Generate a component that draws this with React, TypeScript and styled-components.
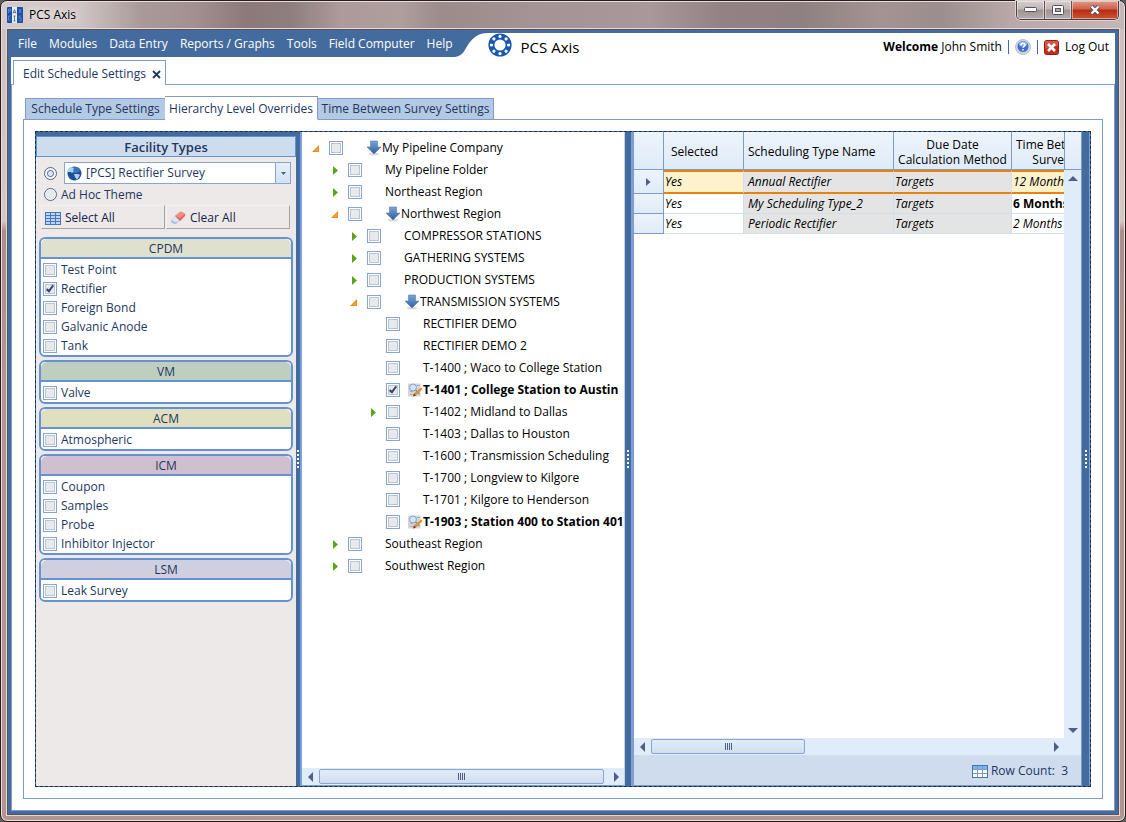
import React from "react";
import styled, { createGlobalStyle, css } from "styled-components";

const c = {
  blue: "#446b9e",
  line: "#7f9cc8",
  navy: "#1e3760",
  sky: "#e0ecfa",
  band: "#cfdcee",
  group: "#6592d0",
  orange: "#e8820f",
};

const GlobalStyle = createGlobalStyle`
  *, *::before, *::after { box-sizing: border-box; }
  html, body { margin: 0; padding: 0; background: #5b6063; }
  body {
    font-family: "Open Sans", "Noto Sans", sans-serif;
    font-size: 12px;
    line-height: 16px;
    color: #000;
  }
  button, select, input { font: inherit; color: inherit; margin: 0; padding: 0; }
  button { border: 0; background: none; white-space: nowrap; }
  svg { display: block; flex: none; }
`;

/* ---------- window chrome ---------- */

const Window = styled.div`
  display: flex;
  flex-direction: column;
  min-height: 100vh;
  padding: 0 6px 6px;
  border: 1px solid #241c1f;
  border-radius: 7px;
  box-shadow: inset 0 0 0 1px #eadfde;
  background:
    linear-gradient(90deg, #d5cbca 0, #cfc5c4 80px, #a99a99 140px, #a39291 190px, #8c7a7a 245px, #8f7e7e 290px, #ac9b9a 340px, #ae9e9c 400px, #9c8b8b 440px, #a59495 540px, #a8989a 650px, #938284 720px, #8f8081 800px, #a39392 880px, #9c8e8e 940px, #b8a9a8 1010px, #c5b7b6 100%) top / 100% 28px no-repeat,
    linear-gradient(180deg, #cfc0be 0, #d6c6c4 220px, #ad8e8a 230px, #b5958f 400px, #b3958f 100%);
`;

const TitleBar = styled.header`
  display: flex;
  align-items: center;
  gap: 6px;
  height: 28px;
`;

const WindowTitle = styled.span`
  flex: 1;
  text-shadow: 0 0 8px #fff, 0 0 8px #fff;
`;

const Caption = styled.div`
  display: flex;
  align-self: flex-start;
  height: 19px;
  overflow: hidden;
  border: 1px solid #4b4346;
  border-top: 0;
  border-radius: 0 0 5px 5px;
  box-shadow: 0 0 0 1px #ddd2d1;
`;

const CaptionButton = styled.button<{ $w: number; $close?: boolean }>`
  display: grid;
  place-items: center;
  width: ${(p) => p.$w}px;
  border-right: ${(p) => (p.$close ? "0" : "1px solid #5c5356")};
  box-shadow: inset 0 0 0 1px rgba(255, 255, 255, 0.45);
  background: ${(p) =>
    p.$close
      ? "linear-gradient(#dd9c8c 0, #cf5f47 45%, #b42c12 50%, #cf5432 100%)"
      : "linear-gradient(#d5cccc 0, #c2b7b7 45%, #9e9292 50%, #b7abac 100%)"};
`;

const Client = styled.div`
  display: flex;
  flex: 1;
  flex-direction: column;
  border: 1px solid #55535c;
  box-shadow: 0 0 0 1px #e4d9d7;
  background: ${c.blue};
`;

/* ---------- application header ---------- */

const AppHeader = styled.div`
  display: flex;
  height: 27px;
`;

const Menu = styled.nav`
  display: flex;
  align-items: center;
  gap: 12px;
  padding: 0 2px 0 10px;
  color: #fff;
`;

const HeaderSheet = styled.div`
  display: flex;
  flex: 1;
  margin: 3px 3px 0 0;
`;

const HeaderFill = styled.div`
  display: flex;
  flex: 1;
  justify-content: space-between;
  align-items: flex-start;
  background: #fff;
`;

const Brand = styled.div`
  display: flex;
  gap: 9px;
  font-size: 15px;
  line-height: 28px;
`;

const Account = styled.div`
  display: flex;
  align-items: center;
  gap: 6px;
  padding: 6px 6px 0 0;
  white-space: nowrap;
`;

const Divider = styled.i`
  width: 1px;
  height: 14px;
  background: ${c.blue};
`;

const PlainButton = styled.button`
  display: flex;
  align-items: center;
  gap: 6px;
`;

/* ---------- document and tabs ---------- */

const Sheet = styled.main`
  display: flex;
  flex: 1;
  flex-direction: column;
  margin: 0 3px 3px;
  padding-top: 3px;
  background: #fff;
`;

const DocTabs = styled.div`
  display: flex;
  padding-left: 2px;
  margin-bottom: -1px;
`;

const DocTab = styled.div`
  display: flex;
  align-items: center;
  gap: 6px;
  height: 25px;
  padding: 2px 4px 0 9px;
  border: 1px solid ${c.line};
  border-bottom: 0;
  background: #fff;
  color: ${c.navy};
  z-index: 1;
`;

const DocBody = styled.div`
  display: flex;
  flex: 1;
  flex-direction: column;
  padding: 11px;
  border: 1px solid ${c.line};
`;

const SubTabs = styled.div`
  display: flex;
  align-items: flex-end;
  margin-bottom: -1px;
  padding-left: 2px;
`;

const SubTab = styled.button<{ $w: number; $active?: boolean }>`
  width: ${(p) => p.$w}px;
  height: ${(p) => (p.$active ? 24 : 22)}px;
  padding-top: ${(p) => (p.$active ? 2 : 0)}px;
  margin-left: ${(p) => (p.$active ? -1 : 0)}px;
  border: 1px solid ${c.line};
  border-bottom-color: ${(p) => (p.$active ? "#fff" : c.line)};
  background: ${(p) => (p.$active ? "#fff" : "#b4c9e3")};
  color: ${c.navy};
  z-index: ${(p) => (p.$active ? 1 : 0)};
  & + & { border-left-width: ${(p) => (p.$active ? 1 : 0)}px; }
`;

const TabPanel = styled.section`
  display: flex;
  flex: 1;
  padding: 11px;
  border: 1px solid ${c.line};
`;

const Split = styled.div`
  display: flex;
  flex: 1;
  min-width: 0;
  border: 1px dashed #14304f;
  background: ${c.blue};
`;

const SplitterBar = styled.div<{ $w: number; $edge?: boolean }>`
  display: flex;
  flex: none;
  flex-direction: column;
  align-items: center;
  justify-content: center;
  gap: 2px;
  width: ${(p) => p.$w}px;
  border-right: ${(p) => (p.$edge ? "1px" : "2px")} solid #7ba0dc;
  background: ${c.blue};
`;

const Dot = styled.i`
  width: 2px;
  height: 2px;
  background: #fff;
`;

const Splitter = ({ w, edge }: { w: number; edge?: boolean }) => (
  <SplitterBar $w={w} $edge={edge} role="separator" aria-orientation="vertical">
    {[0, 1, 2, 3, 4].map((i) => (
      <Dot key={i} />
    ))}
  </SplitterBar>
);

/* ---------- check boxes and radios ---------- */

const tick = css`
  &:checked::after {
    content: "";
    width: 4px;
    height: 8px;
    margin-top: -2px;
    border: solid #3b4468;
    border-width: 0 2px 2px 0;
    transform: rotate(38deg);
  }
`;

const CheckBox = styled.input.attrs({ type: "checkbox" })`
  appearance: none;
  display: grid;
  place-items: center;
  flex: none;
  width: 14px;
  height: 14px;
  border: 1px solid #8aa5cd;
  box-shadow: inset 0 0 0 1px #fff, inset 0 0 0 2px #b9c6d9;
  background: #e8e9eb;
  ${tick}
`;

const Radio = styled.input.attrs({ type: "radio" })`
  appearance: none;
  flex: none;
  width: 13px;
  height: 13px;
  border: 1px solid #55658c;
  border-radius: 50%;
  background: radial-gradient(circle, #e6e8ec 0 4px, #f6f6f8 5px);
  &:checked {
    background: radial-gradient(circle, #dfe8f4 0 2px, #5c7db4 3px, #f6f6f8 4px);
  }
`;

/* ---------- facility types ---------- */

const Facilities = styled.aside`
  display: flex;
  flex: none;
  flex-direction: column;
  width: 260px;
  padding-top: 4px;
  background: linear-gradient(${c.blue} 4px, #ece9e8 4px);
  color: ${c.navy};
`;

const FacilitiesTitle = styled.h2`
  margin: 0;
  height: 21px;
  border: 1px solid ${c.group};
  background: ${c.band};
  font-size: 13px;
  line-height: 21px;
  font-weight: 600;
  text-align: center;
`;

const Themes = styled.div`
  display: grid;
  grid-template-columns: 13px 1fr;
  column-gap: 7px;
  align-items: center;
  padding: 5px 5px 0 8px;
`;

const ComboBox = styled.div`
  position: relative;
  height: 22px;
  > svg { position: absolute; top: 4px; left: 3px; pointer-events: none; }
`;

const Combo = styled.select`
  appearance: none;
  width: 100%;
  height: 22px;
  padding-left: 21px;
  border: 1px solid #8aa5cd;
  border-radius: 0;
  background: #fff;
`;

const ComboArrow = styled.span`
  position: absolute;
  top: 1px;
  right: 1px;
  display: grid;
  place-items: center;
  width: 15px;
  height: 20px;
  border-left: 1px solid #8aa5cd;
  background: linear-gradient(#e6effa, #d3e2f4);
  pointer-events: none;
`;

const AdHoc = styled.label`
  display: flex;
  align-items: center;
  gap: 4px;
  height: 21px;
  padding-left: 8px;
`;

const Actions = styled.div`
  display: grid;
  grid-template-columns: 1fr 1fr;
  gap: 1px;
  padding: 0 6px 0 5px;
  color: #15224a;
`;

const Action = styled.button`
  display: flex;
  align-items: center;
  gap: 4px;
  height: 24px;
  padding: 2px 0 0 3px;
  border: 1px solid #f3f1f0;
  border-right-color: #a5a2a2;
  border-bottom-color: #a5a2a2;
`;

const Groups = styled.div`
  display: flex;
  flex-direction: column;
  gap: 3px;
  padding: 8px 3px;
`;

const Group = styled.fieldset`
  min-width: 0;
  margin: 0;
  padding: 0;
  overflow: hidden;
  border: 2px solid ${c.group};
  border-radius: 6px;
  background: #fff;
`;

const GroupTitle = styled.div<{ $tone: string }>`
  height: 20px;
  border-bottom: 2px solid ${c.group};
  margin-bottom: 1px;
  background: ${(p) => p.$tone};
  line-height: 20px;
  text-align: center;
`;

const Facility = styled.label`
  display: flex;
  align-items: center;
  gap: 4px;
  height: 19px;
  padding-left: 2px;
`;

/* ---------- pipeline tree ---------- */

const TreePanel = styled.section`
  display: flex;
  flex: none;
  flex-direction: column;
  width: 323px;
  border-right: 1px solid #c3d4ea;
  border-bottom: 1px solid ${c.line};
  background: #fff;
`;

const TreeList = styled.ul`
  flex: 1;
  margin: 0;
  padding: 5px 0 0 6px;
  list-style: none;
`;

const TreeRow = styled.li<{ $level: number }>`
  display: flex;
  align-items: center;
  height: 22px;
  padding-left: ${(p) => p.$level * 19}px;
  white-space: nowrap;
`;

const Toggle = styled.span`
  display: grid;
  place-items: center;
  width: 15px;
  height: 16px;
  margin-right: 6px;
`;

const TreeLabel = styled.label<{ $bold?: boolean }>`
  display: flex;
  align-items: center;
  font-weight: ${(p) => (p.$bold ? 700 : 400)};
`;

const IconSlot = styled.span`
  display: flex;
  justify-content: flex-end;
  width: 23px;
`;

/* ---------- scroll bars ---------- */

const HBar = styled.div`
  display: flex;
  align-items: center;
  flex: none;
  height: 17px;
  background: ${c.sky};
`;

const Track = styled.div`
  display: flex;
  flex: 1;
`;

const Thumb = styled.div<{ $share: number }>`
  display: flex;
  align-items: center;
  justify-content: center;
  gap: 1px;
  width: ${(p) => p.$share}%;
  height: 15px;
  border: 1px solid #8aa5cd;
  border-radius: 2px;
  background: linear-gradient(#e0ecf9, #cfdeef);
`;

const Ridge = styled.i`
  width: 1px;
  height: 7px;
  background: #4f5f85;
`;

const ScrollButton = styled.button`
  display: grid;
  place-items: center;
  width: 17px;
  height: 17px;
`;

const ArrowGlyph = ({ dir }: { dir: "left" | "right" | "up" | "down" }) => {
  const d = {
    left: "M7 0v10L2 5z",
    right: "M3 0v10l5-5z",
    up: "M0 7h10L5 2z",
    down: "M0 3h10L5 8z",
  }[dir];
  return (
    <svg width="10" height="10" viewBox="0 0 10 10">
      <path d={d} fill="#4f5f85" />
    </svg>
  );
};

const HScroll = ({ share }: { share: number }) => (
  <HBar>
    <ScrollButton aria-label="Scroll left">
      <ArrowGlyph dir="left" />
    </ScrollButton>
    <Track>
      <Thumb $share={share}>
        {[0, 1, 2, 3].map((i) => (
          <Ridge key={i} />
        ))}
      </Thumb>
    </Track>
    <ScrollButton aria-label="Scroll right">
      <ArrowGlyph dir="right" />
    </ScrollButton>
  </HBar>
);

/* ---------- schedule grid ---------- */

const GridPanel = styled.section`
  display: flex;
  flex: 1;
  flex-direction: column;
  min-width: 0;
  border: 1px solid ${c.line};
  border-top: 0;
  background: #fff;
`;

const GridTop = styled.div`
  display: flex;
  flex: 1;
`;

const Viewport = styled.div`
  flex: 1;
  min-width: 0;
  width: 0;
  overflow: hidden;
`;

const Table = styled.table`
  width: 463px;
  min-width: 100%;
  table-layout: fixed;
  border-collapse: separate;
  border-spacing: 0;
`;

const Th = styled.th<{ $align?: string; $indent?: number }>`
  height: 38px;
  padding: 2px 4px 0 ${(p) => p.$indent ?? 4}px;
  border-right: 1px solid ${c.line};
  border-bottom: 1px solid ${c.line};
  background: linear-gradient(#edf4fc, #dfebf8);
  font-weight: 400;
  line-height: 15px;
  text-align: ${(p) => p.$align ?? "left"};
  white-space: nowrap;
`;

const Marker = styled.td<{ $current?: boolean }>`
  height: ${(p) => (p.$current ? 24 : 20)}px;
  padding: 0 0 0 12px;
  border-right: 1px solid ${c.line};
  border-bottom: 1px solid ${c.line};
  background: linear-gradient(#edf4fc, #dfebf8);
`;

const Td = styled.td<{ $current?: boolean; $tone: "edit" | "locked"; $bold?: boolean; $inset?: boolean }>`
  padding: 0 0 0 ${(p) => (p.$inset ? 4 : 1)}px;
  border-right: 1px solid #d3deec;
  border-bottom: 1px solid #d3deec;
  background: ${(p) => (p.$tone === "locked" ? "#e4e4e4" : p.$current ? "#fdf2cb" : "#fff")};
  font-style: ${(p) => (p.$bold ? "normal" : "italic")};
  font-weight: ${(p) => (p.$bold ? 700 : 400)};
  white-space: nowrap;
  overflow: hidden;
  ${(p) =>
    p.$current &&
    css`
      border-top: 2px solid ${c.orange};
      border-bottom: 2px solid ${c.orange};
    `}
`;

const VBar = styled.div`
  display: flex;
  flex: none;
  flex-direction: column;
  width: 17px;
  background: ${c.sky};
`;

const HeadCorner = styled.div`
  height: 38px;
  border-left: 1px solid ${c.line};
  border-bottom: 1px solid ${c.line};
  background: linear-gradient(#edf4fc, #dfebf8);
`;

const Grow = styled.div`
  flex: 1;
`;

const BarRow = styled.div`
  padding-right: 17px;
  background: ${c.sky};
`;

const GridFooter = styled.footer`
  display: flex;
  align-items: center;
  justify-content: flex-end;
  gap: 3px;
  height: 30px;
  padding: 2px 13px 0 0;
  background: ${c.band};
  color: ${c.navy};
  white-space: pre;
`;

/* ---------- drawings ---------- */

const AppIcon = () => (
  <svg width="16" height="16" viewBox="0 0 16 16">
    <rect width="16" height="16" rx="1" fill="#1c4fa8" />
    <path d="M5 0h5v16H5z" fill="#e8eef8" />
    <path d="M6 6.500l1.500-4L9 6.500M6.500 5.500h2M7.500 9v5M6.500 9h2M6.500 14h2" stroke="#556" fill="none" strokeWidth=".8" />
    <path d="M1.500 6V2h2v2h-2M3.500 9h-2v4h2M12 2l2 4M14 2l-2 4M14 9h-2v2h2v3h-2" stroke="#6b93d6" fill="none" strokeWidth=".8" />
  </svg>
);

const LogoRing = () => (
  <svg width="24" height="24" viewBox="0 0 24 24">
    <circle cx="12" cy="12" r="8.600" fill="none" stroke="#1957b4" strokeWidth="6" />
    {[0, 45, 90, 135, 180, 225, 270, 315].map((a) => (
      <circle key={a} cx="12" cy="3.400" r="1.600" fill="#fff" transform={`rotate(${a} 12 12)`} />
    ))}
  </svg>
);

const Swoosh = () => (
  <svg width="33" height="24" viewBox="0 0 33 24">
    <path d="M0 24C9 23 10 15 15 9C20 3 25 0 33 0V24z" fill="#fff" />
  </svg>
);

const HelpIcon = () => (
  <svg width="16" height="16" viewBox="0 0 16 16">
    <circle cx="8" cy="8" r="7.500" fill="#d5d8de" stroke="#b8bcc4" />
    <circle cx="8" cy="7.500" r="5.500" fill="#3f6fd0" />
    <ellipse cx="8" cy="5" rx="4" ry="2.600" fill="#8fb1ee" />
    <path d="M6 6.200c0-2.600 4-2.500 4-.2 0 1.400-2 1.400-2 2.800" fill="none" stroke="#fff" strokeWidth="1.500" />
    <circle cx="8" cy="10.800" r="0.900" fill="#fff" />
  </svg>
);

const LogoutIcon = () => (
  <svg width="15" height="15" viewBox="0 0 15 15">
    <rect x=".5" y=".5" width="14" height="14" rx="2" fill="#c02b1e" stroke="#a3180f" />
    <path d="M1 2q0-1 1-1h11q1 0 1 1v4q-6 0-13 3z" fill="#dd6a5b" opacity=".7" />
    <path d="M4 4l7 7M11 4l-7 7" stroke="#fff" strokeWidth="2.600" />
  </svg>
);

const GlobeIcon = () => (
  <svg width="15" height="15" viewBox="0 0 15 15">
    <circle cx="7.500" cy="7.500" r="7" fill="#1f4f94" />
    <ellipse cx="8" cy="4" rx="5" ry="3" fill="#4a83c8" opacity=".7" />
    <path d="M0 6q1-4 4-5l3 1-1 2 1 1-2 2-1-1zM7 8l4 0 2 1-3 5-2-3z" fill="#a9d2f2" />
  </svg>
);

const TableIcon = ({ head }: { head?: boolean }) => (
  <svg width="16" height="13" viewBox="0 0 16 13">
    <rect x=".5" y=".5" width="15" height="12" fill={head ? "#fff" : "#b9d6f2"} stroke="#4a74b8" />
    {head && <path d="M1 1h14v3H1z" fill="#79b4ea" />}
    <path
      d={head ? "M1 4.500h14M1 8.500h14M5.500 1v11M10.500 1v11" : "M1 3.500h14M1 6.500h14M1 9.500h14M5.500 1v11M10.500 1v11"}
      stroke={head ? "#7f97c9" : "#4a74b8"}
    />
  </svg>
);

const EraserIcon = () => (
  <svg width="16" height="14" viewBox="0 0 16 14">
    <path d="M1 9l4-4 5 4-4 4H4L1 11z" fill="#a9c3e6" />
    <path d="M1 9l4-4 5 4-4 2z" fill="#dbe7f6" />
    <path d="M5 5l5-4q1-.7 2 0l3 2q.7 1 0 2l-5 5z" fill="#dd6357" />
    <path d="M5 5l5-4q1-.7 2 0l3 2-5 4z" fill="#ee9085" />
  </svg>
);

const DownArrow = () => (
  <svg width="16" height="16" viewBox="0 0 16 16">
    <defs>
      <linearGradient id="down" x2="0" y2="1">
        <stop offset="0" stopColor="#7ba3d6" />
        <stop offset="1" stopColor="#2f5f9f" />
      </linearGradient>
    </defs>
    <ellipse cx="8" cy="14" rx="5" ry="1.500" fill="#dcdcdc" />
    <path d="M4.500 1h7v6h3.500L8 14 1 7h3.500z" fill="url(#down)" stroke="#4f7db8" strokeWidth=".6" />
  </svg>
);

const EditIcon = () => (
  <svg width="15" height="16" viewBox="0 0 15 16">
    <path d="M0 1.500h12.500v13H0z" fill="#d6d6d6" />
    <path d="M2 9.500h3M2 12.500h3M9 3.500h3" stroke="#b0b0b0" />
    <circle cx="5" cy="5.500" r="3.500" fill="#cfe4f7" stroke="#8aa4c0" />
    <path d="M7.500 8l4 4" stroke="#8b8b8b" strokeWidth="1.500" />
    <path d="M5 14.500l1-3 7-6 1.500 1.500-6.500 6.500z" fill="#d9923d" />
    <path d="M5 14.500l1-3 2 2z" fill="#584a3e" />
  </svg>
);

const Closed = () => (
  <svg width="9" height="9" viewBox="-3 0 9 9">
    <path d="M0 0l5 4.500L0 9z" fill="#58a618" />
  </svg>
);

const Opened = () => (
  <svg width="7" height="7" viewBox="0 0 7 7">
    <path d="M7 0v7H0z" fill="#f08c1e" />
    <path d="M6 3v3H3z" fill="#f7a548" />
  </svg>
);

/* ---------- data ---------- */

const menus = ["File", "Modules", "Data Entry", "Reports / Graphs", "Tools", "Field Computer", "Help"];

const groups = [
  { name: "CPDM", tone: "#dfe0cd", items: ["Test Point", "Rectifier", "Foreign Bond", "Galvanic Anode", "Tank"] },
  { name: "VM", tone: "#bfcfbf", items: ["Valve"] },
  { name: "ACM", tone: "#e0dfbf", items: ["Atmospheric"] },
  { name: "ICM", tone: "#d0bfcf", items: ["Coupon", "Samples", "Probe", "Inhibitor Injector"] },
  { name: "LSM", tone: "#d0cfe0", items: ["Leak Survey"] },
];

type Node = { level: number; name: string; state?: "open" | "closed"; edited?: boolean; checked?: boolean };

const nodes: Node[] = [
  { level: 0, name: "My Pipeline Company", state: "open" },
  { level: 1, name: "My Pipeline Folder", state: "closed" },
  { level: 1, name: "Northeast Region", state: "closed" },
  { level: 1, name: "Northwest Region", state: "open" },
  { level: 2, name: "COMPRESSOR STATIONS", state: "closed" },
  { level: 2, name: "GATHERING SYSTEMS", state: "closed" },
  { level: 2, name: "PRODUCTION SYSTEMS", state: "closed" },
  { level: 2, name: "TRANSMISSION SYSTEMS", state: "open" },
  { level: 3, name: "RECTIFIER DEMO" },
  { level: 3, name: "RECTIFIER DEMO 2" },
  { level: 3, name: "T-1400 ; Waco to College Station" },
  { level: 3, name: "T-1401 ; College Station to Austin", edited: true, checked: true },
  { level: 3, name: "T-1402 ; Midland to Dallas", state: "closed" },
  { level: 3, name: "T-1403 ; Dallas to Houston" },
  { level: 3, name: "T-1600 ; Transmission Scheduling" },
  { level: 3, name: "T-1700 ; Longview to Kilgore" },
  { level: 3, name: "T-1701 ; Kilgore to Henderson" },
  { level: 3, name: "T-1903 ; Station 400 to Station 401", edited: true },
  { level: 1, name: "Southeast Region", state: "closed" },
  { level: 1, name: "Southwest Region", state: "closed" },
];

const schedules = [
  { type: "Annual Rectifier", every: "12 Months", current: true },
  { type: "My Scheduling Type_2", every: "6 Months", custom: true },
  { type: "Periodic Rectifier", every: "2 Months" },
];

export default function App() {
  return (
    <>
      <GlobalStyle />
      <Window>
        <TitleBar>
          <AppIcon />
          <WindowTitle>PCS Axis</WindowTitle>
          <Caption>
            <CaptionButton $w={28} aria-label="Minimize">
              <svg width="13" height="6" viewBox="0 0 13 6">
                <rect x=".5" y=".5" width="12" height="4" rx="1" fill="#fff" stroke="#54515c" />
              </svg>
            </CaptionButton>
            <CaptionButton $w={27} aria-label="Restore">
              <svg width="12" height="10" viewBox="0 0 12 10">
                <rect x=".5" y=".5" width="11" height="9" rx="1" fill="#fff" stroke="#54515c" />
                <rect x="3.500" y="3.500" width="5" height="3" fill="#b5abad" stroke="#54515c" />
              </svg>
            </CaptionButton>
            <CaptionButton $w={46} $close aria-label="Close">
              <svg width="12" height="10" viewBox="0 0 12 10">
                <path d="M2.500 1.500l7 7M9.500 1.500l-7 7" stroke="#54515c" strokeWidth="4.400" />
                <path d="M2.500 1.500l7 7M9.500 1.500l-7 7" stroke="#fff" strokeWidth="2.400" />
              </svg>
            </CaptionButton>
          </Caption>
        </TitleBar>
        <Client>
          <AppHeader>
            <Menu>
              {menus.map((m) => (
                <button key={m}>{m}</button>
              ))}
            </Menu>
            <HeaderSheet>
              <Swoosh />
              <HeaderFill>
                <Brand>
                  <LogoRing />
                  PCS Axis
                </Brand>
                <Account>
                  <span>
                    <b>Welcome</b> John Smith
                  </span>
                  <Divider />
                  <PlainButton aria-label="Help">
                    <HelpIcon />
                  </PlainButton>
                  <Divider />
                  <PlainButton>
                    <LogoutIcon />
                    Log Out
                  </PlainButton>
                </Account>
              </HeaderFill>
            </HeaderSheet>
          </AppHeader>
          <Sheet>
            <DocTabs>
              <DocTab>
                Edit Schedule Settings
                <button aria-label="Close tab">
                  <svg width="9" height="9" viewBox="0 0 9 9">
                    <path d="M1 1l7 7M8 1L1 8" stroke={c.navy} strokeWidth="1.800" />
                  </svg>
                </button>
              </DocTab>
            </DocTabs>
            <DocBody>
              <SubTabs>
                <SubTab $w={141}>Schedule Type Settings</SubTab>
                <SubTab $w={153} $active>Hierarchy Level Overrides</SubTab>
                <SubTab $w={176}>Time Between Survey Settings</SubTab>
              </SubTabs>
              <TabPanel>
                <Split>
                  <Facilities>
                    <FacilitiesTitle>Facility Types</FacilitiesTitle>
                    <Themes>
                      <Radio name="theme" aria-label="Saved theme" defaultChecked />
                      <ComboBox>
                        <Combo aria-label="Theme">
                          <option>[PCS] Rectifier Survey</option>
                        </Combo>
                        <GlobeIcon />
                        <ComboArrow>
                          <svg width="5" height="3" viewBox="0 0 5 3">
                            <path d="M0 0h5L2.500 3z" fill="#4f5f85" />
                          </svg>
                        </ComboArrow>
                      </ComboBox>
                    </Themes>
                    <AdHoc>
                      <Radio name="theme" />
                      Ad Hoc Theme
                    </AdHoc>
                    <Actions>
                      <Action>
                        <TableIcon />
                        Select All
                      </Action>
                      <Action>
                        <EraserIcon />
                        Clear All
                      </Action>
                    </Actions>
                    <Groups>
                      {groups.map((g) => (
                        <Group key={g.name} aria-label={g.name}>
                          <GroupTitle $tone={g.tone}>{g.name}</GroupTitle>
                          {g.items.map((item) => (
                            <Facility key={item}>
                              <CheckBox defaultChecked={item === "Rectifier"} />
                              {item}
                            </Facility>
                          ))}
                        </Group>
                      ))}
                    </Groups>
                  </Facilities>
                  <Splitter w={6} />
                  <TreePanel>
                    <TreeList>
                      {nodes.map((n) => (
                        <TreeRow key={n.name} $level={n.level}>
                          <Toggle>
                            {n.state === "open" && <Opened />}
                            {n.state === "closed" && <Closed />}
                          </Toggle>
                          <CheckBox id={n.name} defaultChecked={n.checked} />
                          <TreeLabel htmlFor={n.name} $bold={n.edited}>
                            <IconSlot>{n.edited && <EditIcon />}</IconSlot>
                            {n.state === "open" && <DownArrow />}
                            {n.name}
                          </TreeLabel>
                        </TreeRow>
                      ))}
                    </TreeList>
                    <HScroll share={99} />
                  </TreePanel>
                  <Splitter w={8} />
                  <GridPanel>
                    <GridTop>
                      <Viewport>
                        <Table>
                          <colgroup>
                            <col width="30" />
                            <col width="80" />
                            <col width="150" />
                            <col width="118" />
                            <col width="85" />
                          </colgroup>
                          <thead>
                            <tr>
                              <Th aria-label="Current row" />
                              <Th $indent={7}>Selected</Th>
                              <Th>Scheduling Type Name</Th>
                              <Th $align="center">
                                Due Date
                                <br />
                                Calculation Method
                              </Th>
                              <Th $align="center">
                                Time Between
                                <br />
                                Surveys
                              </Th>
                            </tr>
                          </thead>
                          <tbody>
                            {schedules.map((s) => (
                              <tr key={s.type}>
                                <Marker $current={s.current}>
                                  {s.current && (
                                    <svg width="5" height="8" viewBox="0 0 5 8">
                                      <path d="M0 0l4.500 4L0 8z" fill="#4f5f85" />
                                    </svg>
                                  )}
                                </Marker>
                                <Td $tone="edit" $current={s.current}>Yes</Td>
                                <Td $tone="locked" $current={s.current} $inset>{s.type}</Td>
                                <Td $tone="locked" $current={s.current}>Targets</Td>
                                <Td $tone="edit" $current={s.current} $bold={s.custom}>{s.every}</Td>
                              </tr>
                            ))}
                          </tbody>
                        </Table>
                      </Viewport>
                      <VBar>
                        <HeadCorner />
                        <ScrollButton aria-label="Scroll up">
                          <ArrowGlyph dir="up" />
                        </ScrollButton>
                        <Grow />
                        <ScrollButton aria-label="Scroll down">
                          <ArrowGlyph dir="down" />
                        </ScrollButton>
                      </VBar>
                    </GridTop>
                    <BarRow>
                      <HScroll share={39} />
                    </BarRow>
                    <GridFooter>
                      <TableIcon head />
                      {"Row Count:  3"}
                    </GridFooter>
                  </GridPanel>
                  <Splitter w={8} edge />
                </Split>
              </TabPanel>
            </DocBody>
          </Sheet>
        </Client>
      </Window>
    </>
  );
}
